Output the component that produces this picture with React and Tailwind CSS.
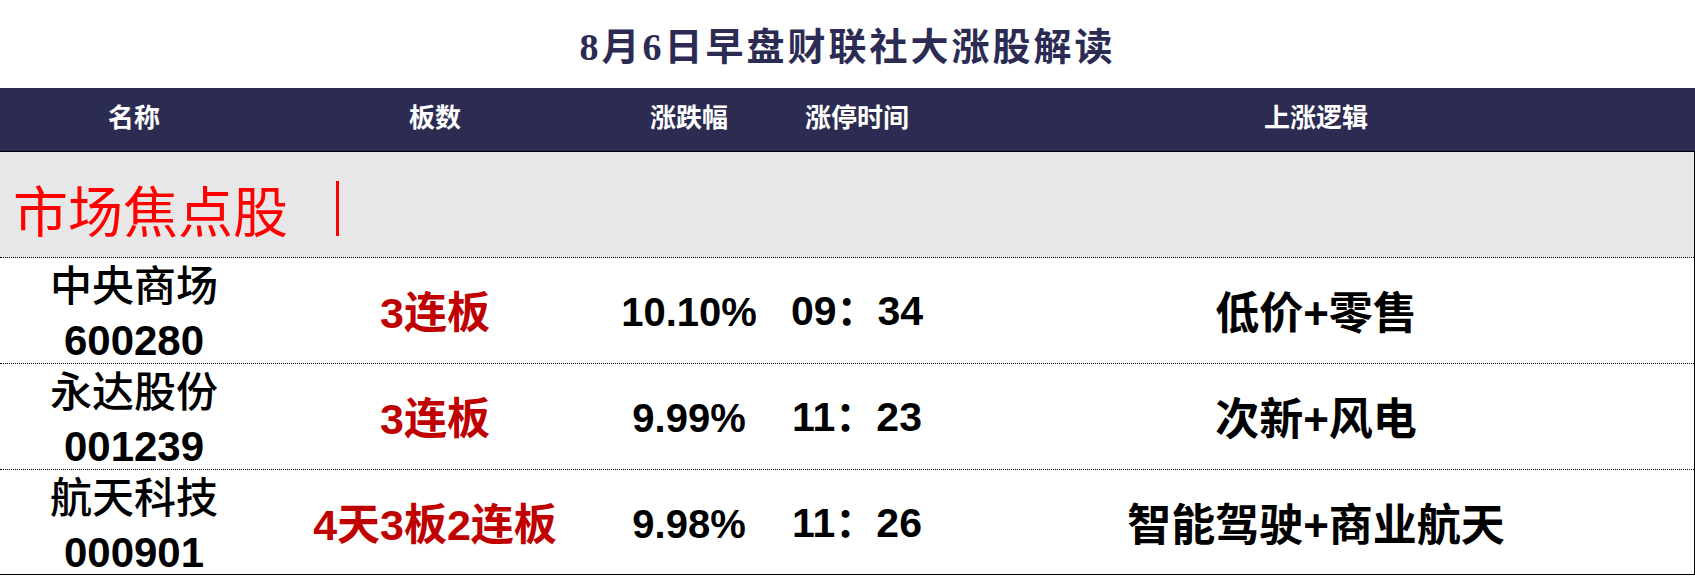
import React from "react";

const cols = "grid grid-cols-[268px_334px_174px_162px_756px]";
const sans = "font-['Liberation_Sans','Noto_Sans_CJK_SC',sans-serif]";

const rows = [
    { name: "中央商场", code: "600280", board: "3连板", pct: "10.10%", time: "09：34", logic: "低价+零售" },
    { name: "永达股份", code: "001239", board: "3连板", pct: "9.99%", time: "11：23", logic: "次新+风电" },
    { name: "航天科技", code: "000901", board: "4天3板2连板", pct: "9.98%", time: "11：26", logic: "智能驾驶+商业航天" },
];

function App() {
    return (
        <div className={`w-[1695px] bg-white ${sans}`}>
            {/* title */}
            <div className="h-[88px] flex items-center justify-center pt-[6px]">
                <h1 className="font-['Liberation_Serif','Noto_Sans_CJK_SC',serif] font-bold text-[38px] tracking-[3px] text-[#2b2b53]">
                    8月6日早盘财联社大涨股解读
                </h1>
            </div>

            {/* header */}
            <div className={`${cols} h-[64px] bg-[#2c2c52] border-b border-black text-white font-bold text-[26px] items-center pb-[3px]`}>
                <div className="text-center">名称</div>
                <div className="text-center">板数</div>
                <div className="text-center">涨跌幅</div>
                <div className="text-center">涨停时间</div>
                <div className="text-center">上涨逻辑</div>
            </div>

            <div className="w-[1695px] border-r border-black">
                {/* section */}
                <div className="h-[106px] bg-[#e7e7e7] border-b border-dotted border-black flex items-center pl-[13px] pt-[8px]">
                    <span className="text-[55px] leading-none text-[#ff0000] font-normal font-['Noto_Sans_CJK_SC',serif]">市场焦点股</span>
                    <span className="ml-[48px] inline-block w-[3px] h-[55px] bg-[#ff0000]"></span>
                </div>

                {rows.map((r, i) => (
                    <div
                        key={r.code}
                        className={`${cols} items-center font-bold ${i === 2 ? "h-[105px] border-b border-black" : "h-[106px] border-b border-dotted border-black"}`}
                    >
                        <div className="flex flex-col items-center gap-[6px] text-[42px] leading-[48px] text-black pt-[5px]">
                            <div className="font-medium">{r.name}</div>
                            <div className="font-bold">{r.code}</div>
                        </div>
                        <div className="text-center text-[43px] text-[#c00000] pt-[4px]">{r.board}</div>
                        <div className="text-center text-[40px] text-black">{r.pct}</div>
                        <div className="text-center text-[41px] text-black">{r.time}</div>
                        <div className="text-center text-[44px] text-black pt-[4px]">{r.logic}</div>
                    </div>
                ))}
            </div>
        </div>
    );
}

export default App;
